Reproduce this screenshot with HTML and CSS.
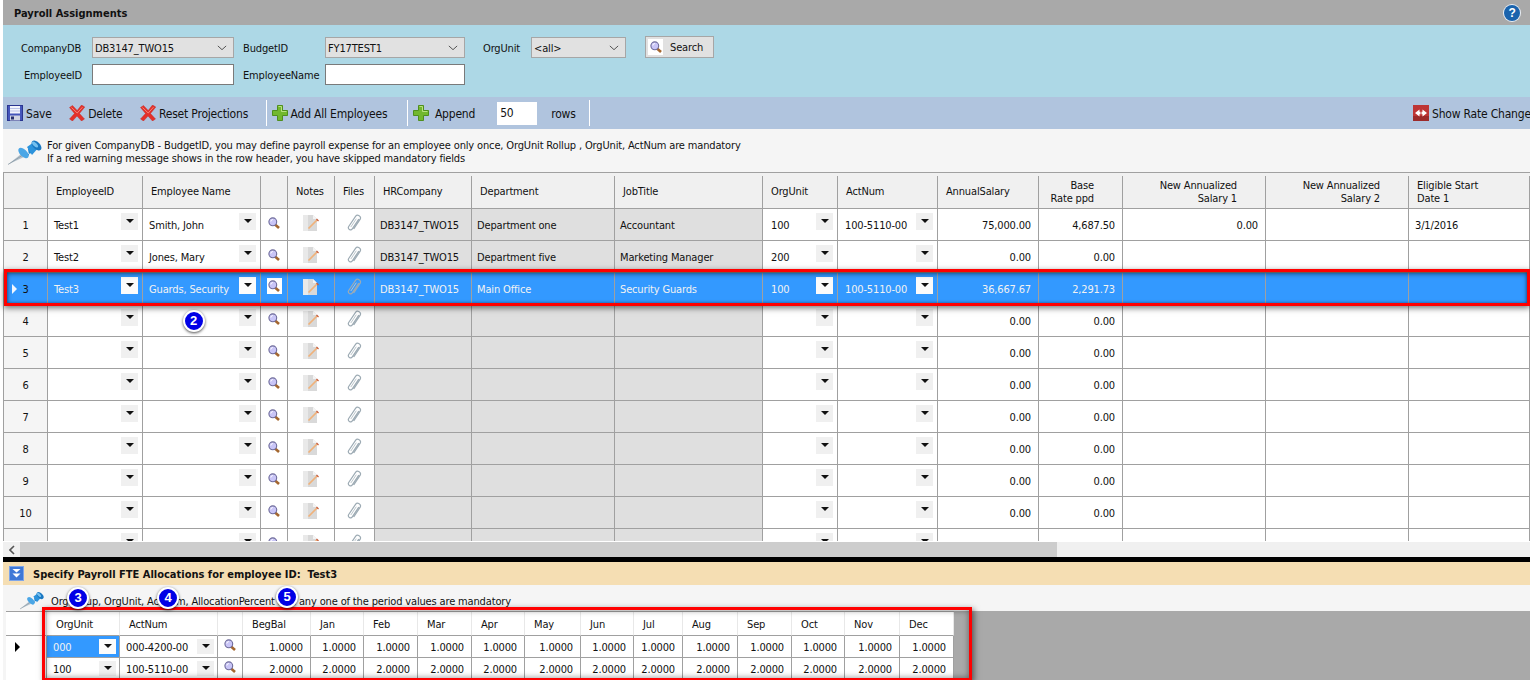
FILE: index.html
```html
<!DOCTYPE html>
<html lang="en">
<head>
<meta charset="utf-8">
<title>Payroll Assignments</title>
<link rel="stylesheet" href="styles.css">
</head>
<body>
<svg class="defs" aria-hidden="true">
  <symbol id="save" viewBox="0 0 16 16"><rect x=".5" y=".5" width="15" height="15" fill="#4455bb" stroke="#2a3590"/><rect x="3" y="1" width="10" height="7.500" fill="#f2f4fc"/><rect x="3" y="3" width="10" height="1" fill="#b9c2e8"/><rect x="3" y="5.500" width="10" height="1" fill="#b9c2e8"/><rect x="3" y="10.500" width="10" height="5" fill="#d0d4e2"/><rect x="4" y="11.500" width="3" height="3" fill="#27306e"/></symbol>
  <symbol id="x" viewBox="0 0 16 16"><path d="M.5 2.500 3.500.5 8.200 5.500 12.500 0 15.800 2 10.500 8.500 15.500 14 12.500 16 8 11 3.500 16 .5 14 5.500 8.500Z" fill="#e4302a" stroke="#bb2620" stroke-width=".4"/><path d="M2.500 2.500 8.200 8 13.500 2.200" fill="none" stroke="#f28379" stroke-width="1"/></symbol>
  <symbol id="plus" viewBox="0 0 16 16"><path d="M5.500.5h5v5h5v5h-5v5h-5v-5h-5v-5h5Z" fill="#72b82e" stroke="#4f8f1d"/><path d="M6.500 1.500h3v5h5" fill="none" stroke="#b7e27f"/></symbol>
  <symbol id="arrows" viewBox="0 0 16 16"><rect width="16" height="16" fill="#be3535"/><rect y="11" width="16" height="5" fill="#9c2a2a"/><path d="M2 8 6.500 4.500V6.800h1v2.400h-1v2.300ZM14 8 9.500 4.500V6.800h-1v2.400h1v2.300Z" fill="#fff"/></symbol>
  <symbol id="mag" viewBox="0 0 12 12"><path d="M7 7.500 11 11" stroke="#a4672f" stroke-width="2.600"/><circle cx="4.800" cy="4.800" r="3.900" fill="#c9c5f7" stroke="#6d6a9a" stroke-width="1.100"/><path d="M2.800 4.500a2.200 2.200 0 0 1 2-2" stroke="#fff" fill="none"/></symbol>
  <symbol id="note" viewBox="0 0 16 16"><path d="M0 0h10l4 4v12H0Z" fill="#d9d9d9"/><path d="M0 0h5v16H0Z" fill="#e9e9e9"/><path d="M10 0v4h4Z" fill="#f4f4f4"/><path d="M5.500 13.500 14 5" stroke="#f0b27a" stroke-width="1.700"/><path d="M13.500 4 15.500 6" stroke="#c75c3a" stroke-width="1.300"/></symbol>
  <symbol id="clip" viewBox="0 0 15 18"><path d="M11.800 5 5.300 14.800c-1.500 2.200-5 .2-3.600-2.300L8.700 2.200c1.700-2.300 6 .2 4.500 3L6.700 15" fill="none" stroke="#9dabb4" stroke-width="1.200"/><path d="M9.300 4.700 3.800 13" fill="none" stroke="#bcc6cc" stroke-width="1"/></symbol>
  <symbol id="pin" viewBox="0 0 34 25"><path d="M0 24.500 13 14l3 3Z" fill="#b5c2cc"/><path d="M0 24.500 14 15.500" stroke="#7f8f9b" stroke-width=".7"/><path d="M12 9.500c3-.5 6 2 7 7.500l2-2-1-6 6-5 3 4-5 5-4 1Z" fill="#1f84cf"/><ellipse cx="15.500" cy="13" rx="3.500" ry="6.500" transform="rotate(-45 15.500 13)" fill="#4aa6e6"/><path d="M19 7 26 2l5 5-7 8Z" fill="#2c93dc"/><ellipse cx="28.500" cy="5.500" rx="3.500" ry="6" transform="rotate(-45 28.500 5.500)" fill="#1a78c2"/><ellipse cx="27" cy="4.500" rx="1.800" ry="3.800" transform="rotate(-45 27 4.500)" fill="#74c0f0"/></symbol>
  <symbol id="collapse" viewBox="0 0 15 15"><rect width="15" height="15" fill="#3f78d6"/><rect x=".5" y=".5" width="14" height="14" fill="none" stroke="#7fa6e8"/><path d="M3.500 3h8L7.500 6.500ZM3.500 7.500h8L7.500 11.500Z" fill="#fff"/></symbol>
</svg>

<div class="app">
  <header class="title"><h1>Payroll Assignments</h1><span class="help">?</span></header>

  <section class="filters">
    <label class="lb">CompanyDB</label><div class="sel"><span>DB3147_TWO15</span><svg class="chev" viewBox="0 0 12 6"><path d="M1 .5 6 5l5-4.500"/></svg></div>
    <label class="lb lb2">BudgetID</label><div class="sel"><span>FY17TEST1</span><svg class="chev" viewBox="0 0 12 6"><path d="M1 .5 6 5l5-4.500"/></svg></div>
    <label class="lb lb3">OrgUnit</label><div class="sel"><span>&lt;all&gt;</span><svg class="chev" viewBox="0 0 12 6"><path d="M1 .5 6 5l5-4.500"/></svg></div>
    <button class="search"><span class="sicon"><svg class="mag"><use href="#mag"/></svg></span>Search</button>
    <label class="lb lb4">EmployeeID</label><input class="txt" type="text">
    <label class="lb lb2">EmployeeName</label><input class="txt" type="text">
  </section>

  <nav class="toolbar">
    <span class="tool"><svg class="ti"><use href="#save"/></svg>Save</span>
    <span class="tool"><svg class="ti"><use href="#x"/></svg>Delete</span>
    <span class="tool"><svg class="ti"><use href="#x"/></svg>Reset Projections</span>
    <i class="sep"></i>
    <span class="tool addall"><svg class="ti"><use href="#plus"/></svg>Add All Employees</span>
    <i class="sep"></i>
    <span class="tool append"><svg class="ti"><use href="#plus"/></svg>Append</span>
    <input class="rows" type="text" value="50">
    <span class="tool rowlbl">rows</span>
    <i class="sep"></i>
    <span class="tool rate"><svg class="ti"><use href="#arrows"/></svg>Show Rate Changes</span>
  </nav>

  <div class="note">
    <svg class="pin"><use href="#pin"/></svg>
    <p>For given CompanyDB - BudgetID, you may define payroll expense for an employee only once, OrgUnit Rollup , OrgUnit, ActNum are mandatory<br>If a red warning message shows in the row header, you have skipped mandatory fields</p>
  </div>

  <div class="gridwrap">
    <table class="grid">
      <colgroup><col class="w45"><col class="w95"><col class="w118"><col class="w27"><col class="w47"><col class="w40"><col class="w97"><col class="w143"><col class="w148"><col class="w75"><col class="w100"><col class="w101"><col class="w84"><col class="w143"><col class="w143"><col class="w121"></colgroup>
      <thead><tr><th class="rh"></th><th>EmployeeID</th><th>Employee Name</th><th></th><th>Notes</th><th>Files</th><th>HRCompany</th><th>Department</th><th>JobTitle</th><th>OrgUnit</th><th>ActNum</th><th>AnnualSalary</th><th class="hr">Base<br>Rate ppd</th><th class="hr">New Annualized<br>Salary 1</th><th class="hr">New Annualized<br>Salary 2</th><th>Eligible Start<br>Date 1</th></tr></thead>
      <tbody>
        <tr><th class="rh">1</th><td><div class="c"><span>Test1</span><i class="dd"></i></div></td><td><div class="c"><span>Smith, John</span><i class="dd"></i></div></td><td class="ic"><svg class="mag"><use href="#mag"/></svg></td><td class="ic"><svg class="nt"><use href="#note"/></svg></td><td class="ic"><svg class="cl"><use href="#clip"/></svg></td><td class="ro">DB3147_TWO15</td><td class="ro">Department one</td><td class="ro">Accountant</td><td class="org"><div class="c"><span>100</span><i class="dd"></i></div></td><td class="act"><div class="c"><span>100-5110-00</span><i class="dd"></i></div></td><td class="num">75,000.00</td><td class="num">4,687.50</td><td class="num">0.00</td><td></td><td>3/1/2016</td></tr>
        <tr><th class="rh">2</th><td><div class="c"><span>Test2</span><i class="dd"></i></div></td><td><div class="c"><span>Jones, Mary</span><i class="dd"></i></div></td><td class="ic"><svg class="mag"><use href="#mag"/></svg></td><td class="ic"><svg class="nt"><use href="#note"/></svg></td><td class="ic"><svg class="cl"><use href="#clip"/></svg></td><td class="ro">DB3147_TWO15</td><td class="ro">Department five</td><td class="ro">Marketing Manager</td><td class="org"><div class="c"><span>200</span><i class="dd"></i></div></td><td class="act"><div class="c"><span></span><i class="dd"></i></div></td><td class="num">0.00</td><td class="num">0.00</td><td></td><td></td><td></td></tr>
        <tr class="sel-row"><th class="rh"><b class="tri"></b>3</th><td><div class="c"><span>Test3</span><i class="dd"></i></div></td><td><div class="c"><span>Guards, Security</span><i class="dd"></i></div></td><td class="ic"><span class="wbox"><svg class="mag"><use href="#mag"/></svg></span></td><td class="ic"><svg class="nt"><use href="#note"/></svg></td><td class="ic"><svg class="cl"><use href="#clip"/></svg></td><td class="ro">DB3147_TWO15</td><td class="ro">Main Office</td><td class="ro">Security Guards</td><td class="org"><div class="c"><span>100</span><i class="dd"></i></div></td><td class="act"><div class="c"><span>100-5110-00</span><i class="dd"></i></div></td><td class="num">36,667.67</td><td class="num">2,291.73</td><td></td><td></td><td></td></tr>
        <tr><th class="rh">4</th><td><div class="c"><span></span><i class="dd"></i></div></td><td><div class="c"><span></span><i class="dd"></i></div></td><td class="ic"><svg class="mag"><use href="#mag"/></svg></td><td class="ic"><svg class="nt"><use href="#note"/></svg></td><td class="ic"><svg class="cl"><use href="#clip"/></svg></td><td class="ro"></td><td class="ro"></td><td class="ro"></td><td><div class="c"><span></span><i class="dd"></i></div></td><td><div class="c"><span></span><i class="dd"></i></div></td><td class="num">0.00</td><td class="num">0.00</td><td></td><td></td><td></td></tr>
        <tr><th class="rh">5</th><td><div class="c"><span></span><i class="dd"></i></div></td><td><div class="c"><span></span><i class="dd"></i></div></td><td class="ic"><svg class="mag"><use href="#mag"/></svg></td><td class="ic"><svg class="nt"><use href="#note"/></svg></td><td class="ic"><svg class="cl"><use href="#clip"/></svg></td><td class="ro"></td><td class="ro"></td><td class="ro"></td><td><div class="c"><span></span><i class="dd"></i></div></td><td><div class="c"><span></span><i class="dd"></i></div></td><td class="num">0.00</td><td class="num">0.00</td><td></td><td></td><td></td></tr>
        <tr><th class="rh">6</th><td><div class="c"><span></span><i class="dd"></i></div></td><td><div class="c"><span></span><i class="dd"></i></div></td><td class="ic"><svg class="mag"><use href="#mag"/></svg></td><td class="ic"><svg class="nt"><use href="#note"/></svg></td><td class="ic"><svg class="cl"><use href="#clip"/></svg></td><td class="ro"></td><td class="ro"></td><td class="ro"></td><td><div class="c"><span></span><i class="dd"></i></div></td><td><div class="c"><span></span><i class="dd"></i></div></td><td class="num">0.00</td><td class="num">0.00</td><td></td><td></td><td></td></tr>
        <tr><th class="rh">7</th><td><div class="c"><span></span><i class="dd"></i></div></td><td><div class="c"><span></span><i class="dd"></i></div></td><td class="ic"><svg class="mag"><use href="#mag"/></svg></td><td class="ic"><svg class="nt"><use href="#note"/></svg></td><td class="ic"><svg class="cl"><use href="#clip"/></svg></td><td class="ro"></td><td class="ro"></td><td class="ro"></td><td><div class="c"><span></span><i class="dd"></i></div></td><td><div class="c"><span></span><i class="dd"></i></div></td><td class="num">0.00</td><td class="num">0.00</td><td></td><td></td><td></td></tr>
        <tr><th class="rh">8</th><td><div class="c"><span></span><i class="dd"></i></div></td><td><div class="c"><span></span><i class="dd"></i></div></td><td class="ic"><svg class="mag"><use href="#mag"/></svg></td><td class="ic"><svg class="nt"><use href="#note"/></svg></td><td class="ic"><svg class="cl"><use href="#clip"/></svg></td><td class="ro"></td><td class="ro"></td><td class="ro"></td><td><div class="c"><span></span><i class="dd"></i></div></td><td><div class="c"><span></span><i class="dd"></i></div></td><td class="num">0.00</td><td class="num">0.00</td><td></td><td></td><td></td></tr>
        <tr><th class="rh">9</th><td><div class="c"><span></span><i class="dd"></i></div></td><td><div class="c"><span></span><i class="dd"></i></div></td><td class="ic"><svg class="mag"><use href="#mag"/></svg></td><td class="ic"><svg class="nt"><use href="#note"/></svg></td><td class="ic"><svg class="cl"><use href="#clip"/></svg></td><td class="ro"></td><td class="ro"></td><td class="ro"></td><td><div class="c"><span></span><i class="dd"></i></div></td><td><div class="c"><span></span><i class="dd"></i></div></td><td class="num">0.00</td><td class="num">0.00</td><td></td><td></td><td></td></tr>
        <tr><th class="rh">10</th><td><div class="c"><span></span><i class="dd"></i></div></td><td><div class="c"><span></span><i class="dd"></i></div></td><td class="ic"><svg class="mag"><use href="#mag"/></svg></td><td class="ic"><svg class="nt"><use href="#note"/></svg></td><td class="ic"><svg class="cl"><use href="#clip"/></svg></td><td class="ro"></td><td class="ro"></td><td class="ro"></td><td><div class="c"><span></span><i class="dd"></i></div></td><td><div class="c"><span></span><i class="dd"></i></div></td><td class="num">0.00</td><td class="num">0.00</td><td></td><td></td><td></td></tr>
        <tr><th class="rh"></th><td><div class="c"><span></span><i class="dd"></i></div></td><td><div class="c"><span></span><i class="dd"></i></div></td><td class="ic"><svg class="mag"><use href="#mag"/></svg></td><td class="ic"><svg class="nt"><use href="#note"/></svg></td><td class="ic"><svg class="cl"><use href="#clip"/></svg></td><td class="ro"></td><td class="ro"></td><td class="ro"></td><td><div class="c"><span></span><i class="dd"></i></div></td><td><div class="c"><span></span><i class="dd"></i></div></td><td></td><td></td><td></td><td></td><td></td></tr>
      </tbody>
    </table>
  </div>

  <div class="hscroll"><span class="sarrow"><svg viewBox="0 0 6 10"><path d="M5 1 1 5l4 4"/></svg></span><span class="thumb"></span></div>
  <div class="divider"></div>

  <div class="subhead"><svg class="coll"><use href="#collapse"/></svg><strong>Specify Payroll FTE Allocations for employee ID:&nbsp; Test3</strong></div>
  <div class="note2"><svg class="pin2"><use href="#pin"/></svg><p>OrgRollup, OrgUnit, ActNum, AllocationPercent and any one of the period values are mandatory</p></div>

  <div class="lower">
    <div class="lowerbg">
      <table class="grid2">
        <colgroup><col class="l41"><col class="l73"><col class="l98"><col class="l25"><col class="l68"><col class="l53"><col class="l54"><col class="l54"><col class="l53"><col class="l56"><col class="l53"><col class="l49"><col class="l55"><col class="l54"><col class="l53"><col class="l55"><col class="l54"></colgroup>
        <thead><tr><th></th><th>OrgUnit</th><th>ActNum</th><th></th><th>BegBal</th><th>Jan</th><th>Feb</th><th>Mar</th><th>Apr</th><th>May</th><th>Jun</th><th>Jul</th><th>Aug</th><th>Sep</th><th>Oct</th><th>Nov</th><th>Dec</th></tr></thead>
        <tbody>
          <tr><th class="rh2"><b class="tri2"></b></th><td class="active"><div class="c2"><span>000</span><i class="dd white"></i></div></td><td><div class="c2"><span>000-4200-00</span><i class="dd"></i></div></td><td class="ic"><svg class="mag"><use href="#mag"/></svg></td><td class="num">1.0000</td><td class="num">1.0000</td><td class="num">1.0000</td><td class="num">1.0000</td><td class="num">1.0000</td><td class="num">1.0000</td><td class="num">1.0000</td><td class="num">1.0000</td><td class="num">1.0000</td><td class="num">1.0000</td><td class="num">1.0000</td><td class="num">1.0000</td><td class="num">1.0000</td></tr>
          <tr><th class="rh2"></th><td><div class="c2"><span>100</span><i class="dd"></i></div></td><td><div class="c2"><span>100-5110-00</span><i class="dd"></i></div></td><td class="ic"><svg class="mag"><use href="#mag"/></svg></td><td class="num">2.0000</td><td class="num">2.0000</td><td class="num">2.0000</td><td class="num">2.0000</td><td class="num">2.0000</td><td class="num">2.0000</td><td class="num">2.0000</td><td class="num">2.0000</td><td class="num">2.0000</td><td class="num">2.0000</td><td class="num">2.0000</td><td class="num">2.0000</td><td class="num">2.0000</td></tr>
        </tbody>
      </table>
    </div>
  </div>

  <div class="hl hl-row"></div>
  <div class="hl hl-low"></div>
  <span class="badge b2">2</span>
  <span class="badge b3">3</span>
  <span class="badge b4">4</span>
  <span class="badge b5">5</span>
</div>
</body>
</html>
```
FILE: styles.css
```css
* { box-sizing: border-box; }
html, body { margin: 0; padding: 0; background: #fff; }
body { font: 11px/13px "DejaVu Sans", "Liberation Sans", sans-serif; font-stretch: condensed; letter-spacing: -.15px; color: #111; }
.defs { position: absolute; width: 0; height: 0; }

.app { position: relative; width: 1530px; height: 680px; padding-left: 3px; overflow: hidden; }

.title { height: 25px; background: #a9a9a9; display: flex; align-items: center; justify-content: space-between; padding: 0 10px 0 11px; }
.title h1 { margin: 0; padding-top: 2px; font-size: 11px; font-weight: 700; letter-spacing: 0; color: #111; }
.help { width: 16px; height: 16px; border-radius: 50%; background: #1a63ad; box-shadow: 0 0 0 1px #e8eef5; color: #fff; font: 700 12px/16px "Liberation Sans", sans-serif; text-align: center; }

.filters { height: 72px; background: #add8e6; padding: 12px 0 0 18px; display: grid; grid-template-columns: 71px 142px 91px 140px 66px 95px auto; grid-auto-rows: 21px; row-gap: 6px; align-items: center; justify-content: start; }
.lb { white-space: nowrap; padding-top: 2px; }
.lb4 { padding-left: 3px; }
.lb2 { padding-left: 9px; }
.lb3 { padding-left: 18px; }
.sel { height: 21px; background: #e1e1e1; border: 1px solid #a6a6a6; padding: 0 6px 0 2px; display: flex; align-items: center; justify-content: space-between; }
.sel span { padding-top: 2px; }
.chev { width: 10px; height: 6px; }
.chev path { fill: none; stroke: #555; stroke-width: 1.2; }
.txt { width: 100%; height: 21px; border: 1px solid #7a7a7a; background: #fff; margin: 0; padding: 0; }
.search { justify-self: start; margin-left: 19px; width: 69px; height: 22px; margin-top: -1px; background: #e1e1e1; border: 1px solid #a6a6a6; padding: 0 0 0 2px; display: flex; align-items: center; font: inherit; font-stretch: condensed; letter-spacing: inherit; color: inherit; }
.sicon { width: 15px; height: 16px; background: #fff; display: flex; align-items: center; justify-content: center; margin-right: 7px; }
.mag { width: 12px; height: 12px; }

.toolbar { height: 32px; background: #b0c4de; display: flex; align-items: center; padding-left: 4px; font-size: 12px; letter-spacing: -.2px; }
.tool { display: flex; align-items: center; margin-right: 17.500px; padding-top: 2px; white-space: nowrap; }
.ti { width: 16px; height: 16px; margin: -2px 3px 0 0; flex: none; }
.sep { width: 1px; height: 26px; background: #fff; margin-right: 5px; }
.addall { margin-right: 19.500px; }
.append .ti { margin-right: 6px; }
.append { margin-right: 22px; }
.rows { width: 40px; height: 23px; border: 0; background: #fff; padding: 0 0 0 3px; margin: 0 14px 0 0; font: inherit; font-stretch: condensed; letter-spacing: inherit; color: inherit; }
.rowlbl { margin-right: 13px; }
.rate { margin: 0 0 0 auto; width: 117px; overflow: hidden; flex: none; }

.note { height: 43px; background: #f5f5f5; display: flex; align-items: flex-start; padding: 10px 0 0 5px; }
.note p { margin: 0; }
.pin { width: 34px; height: 25px; margin: 1px 5px 0 0; flex: none; }

.gridwrap { height: 369px; overflow: hidden; }
.grid, .grid2 { border-collapse: separate; border-spacing: 0; table-layout: fixed; font-size: 11px; }
.grid { width: 1527px; border-top: 1px solid #a0a0a0; }
.grid th, .grid td, .grid2 th, .grid2 td { padding: 0; font-weight: 400; text-align: left; white-space: nowrap; overflow: hidden; }
.w45 { width: 45px; } .w95 { width: 95px; } .w118 { width: 118px; } .w27 { width: 27px; } .w47 { width: 47px; } .w40 { width: 40px; } .w97 { width: 97px; } .w143 { width: 143px; } .w148 { width: 148px; } .w75 { width: 75px; } .w100 { width: 100px; } .w101 { width: 101px; } .w84 { width: 84px; } .w121 { width: 121px; }
.grid thead th { height: 36px; background: linear-gradient(#a0a0a0, #a0a0a0) right 3px / 1px 100% no-repeat #f0f0f0; border-bottom: 1px solid #a0a0a0; padding: 2px 0 0 8px; }
.grid thead th.hr { text-align: right; padding: 2px 29px 0 0; }
.grid thead th.rh { border-left: 1px solid #a0a0a0; }
.grid tbody td, .grid tbody th { height: 32px; border-right: 1px solid #a0a0a0; border-bottom: 1px solid #a0a0a0; padding: 2px 0 0 6px; background: #fff; vertical-align: middle; }
.grid tbody th.rh { border-left: 1px solid #a0a0a0; background: #f5f5f5; text-align: center; padding: 2px 0 0; position: relative; }
.grid tbody td.ro { background: #dfdfdf; padding-left: 5px; }
.grid tbody td.num { text-align: right; padding: 2px 7px 0 0; }
.grid tbody td.ic { padding: 0 0 4px; text-align: center; }
.ic svg { display: inline-block; vertical-align: middle; }
.nt { width: 16px; height: 16px; }
.cl { width: 15px; height: 18px; }
.grid tbody td:has(> .c) { padding: 0 0 0 6px; }
.grid tbody td.org { padding-left: 8px; }
.grid tbody td.act { padding-left: 7px; }
.c { display: flex; justify-content: space-between; height: 31px; align-items: center; padding-right: 4px; }
.c span { padding-top: 2px; }
.c .dd { align-self: flex-start; margin-top: 4px; }
.dd { width: 17px; height: 17px; background: #f0f0f0; display: flex; align-items: center; justify-content: center; flex: none; }
.dd::after { content: ""; border: 4px solid transparent; border-top-color: #111; border-bottom: 0; margin-top: -2px; }
.tri { position: absolute; left: 8px; top: 11px; border: 5px solid transparent; border-left-color: #f2f7ff; border-right: 0; }
.grid tbody .sel-row td, .grid tbody .sel-row th.rh { background: #3399ff; color: #f2f2f2; }
.grid tbody .sel-row th.rh { color: #111; }
.sel-row .dd { background: #fbfbfb; }
.wbox { display: inline-flex; width: 15px; height: 16px; background: #fff; align-items: center; justify-content: center; }

.hscroll { height: 16px; background: #f0f0f0; display: flex; border-top: 1px solid #fff; }
.sarrow { width: 17px; display: flex; align-items: center; justify-content: center; }
.sarrow svg { width: 6px; height: 10px; }
.sarrow path { fill: none; stroke: #555; stroke-width: 1.600; }
.thumb { width: 1037px; background: #cdcdcd; }
.divider { height: 5px; background: #000; }

.subhead { height: 23px; background: #f5deb3; display: flex; align-items: center; padding-left: 6px; }
.coll { width: 15px; height: 15px; margin-right: 9px; }
.subhead strong { font-size: 11px; padding-top: 2px; letter-spacing: 0; }
.note2 { height: 26px; background: #f5f5f5; display: flex; align-items: flex-end; padding-left: 17px; }
.note2 p { margin: 0 0 3px; }
.pin2 { width: 24px; height: 21px; margin-right: 7px; }

.lower { height: 69px; background: #f5f5f5; padding-left: 3px; }
.lowerbg { height: 69px; background: #a9a9a9; }
.grid2 { width: 948px; background: #fff; border-top: 1px solid #a0a0a0; }
.l41 { width: 41px; } .l73 { width: 73px; } .l98 { width: 98px; } .l25 { width: 25px; } .l68 { width: 68px; } .l53 { width: 53px; } .l54 { width: 54px; } .l56 { width: 56px; } .l49 { width: 49px; } .l55 { width: 55px; }
.grid2 thead th { height: 24px; border-right: 1px solid #e8e8e8; border-bottom: 1px solid #a0a0a0; padding: 2px 0 0 9px; }
.grid2 tbody td { height: 22px; border-right: 1px solid #a0a0a0; border-bottom: 1px solid #a0a0a0; padding-left: 6px; }
.grid2 tbody td.num { text-align: right; padding: 2px 7px 0 0; }
.grid2 tbody td.ic { padding: 0 0 4px; text-align: center; }
.grid2 .rh2 { border-right: 1px solid #a0a0a0; padding-left: 9px; vertical-align: middle; }
.grid2 td.active { background: #3399ff; color: #f2f2f2; }
.c2 { display: flex; justify-content: space-between; align-items: center; height: 21px; padding-right: 3px; }
.c2 span { padding-top: 2px; }
.c2 .dd { height: 15px; }
.dd.white { background: #fbfbfb; }
.tri2 { display: block; border: 5px solid transparent; border-left-color: #000; border-right: 0; width: 0; }

.hl { position: absolute; border: 3px solid #f00; pointer-events: none; }
.hl-row { left: 4px; top: 269px; width: 1526px; height: 37px; box-shadow: 0 2px 6px rgba(0,0,0,.55), inset 0 2px 5px rgba(0,0,0,.45), inset 0 0 3px rgba(0,0,0,.35); }
.hl-low { left: 42px; top: 607px; width: 930px; height: 74px; box-shadow: 2px 2px 6px rgba(0,0,0,.5), inset 0 0 6px rgba(0,0,0,.45); }

.badge { position: absolute; width: 22px; height: 22px; margin: -11px 0 0 -11px; border-radius: 50%; background: #0000e6; border: 2px solid #fff; box-shadow: 0 1px 3px rgba(0,0,0,.7); color: #fff; font: 700 13px/18px "Liberation Sans", sans-serif; letter-spacing: 0; text-align: center; }
.b2 { left: 193.500px; top: 321px; }
.b3 { left: 78px; top: 598px; }
.b4 { left: 168px; top: 598px; }
.b5 { left: 287px; top: 597px; }
```
